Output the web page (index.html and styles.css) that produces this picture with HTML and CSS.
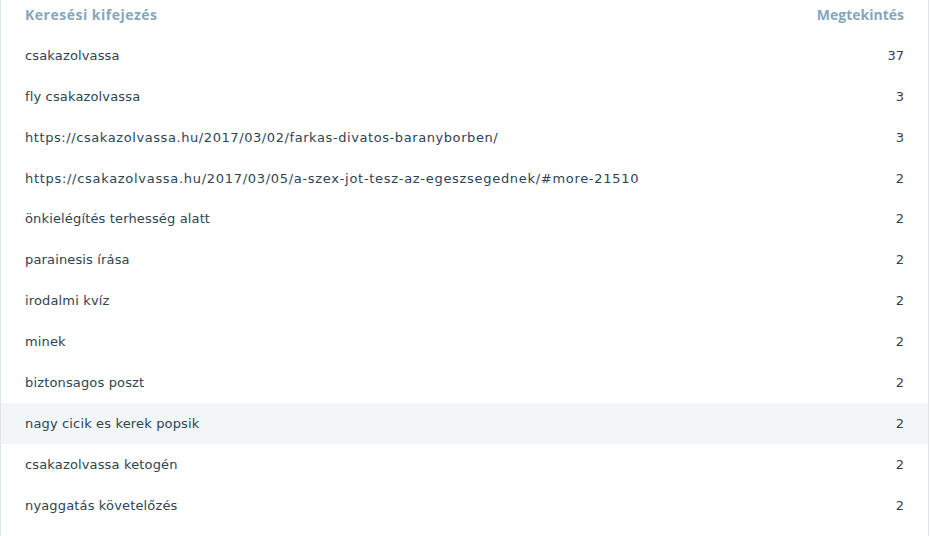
FILE: index.html
```html
<!DOCTYPE html>
<html lang="hu">
<head>
<meta charset="utf-8">
<title>Keresési kifejezések</title>
<link rel="stylesheet" href="styles.css">
</head>
<body>
<div class="card">
  <div class="row head">
    <span class="label">Keresési kifejezés</span>
    <span class="value">Megtekintés</span>
  </div>
  <ul class="list">
    <li class="row"><span class="label">csakazolvassa</span><span class="value">37</span></li>
    <li class="row"><span class="label">fly csakazolvassa</span><span class="value">3</span></li>
    <li class="row"><span class="label url">https://csakazolvassa.hu/2017/03/02/farkas-divatos-baranyborben/</span><span class="value">3</span></li>
    <li class="row"><span class="label url long">https://csakazolvassa.hu/2017/03/05/a-szex-jot-tesz-az-egeszsegednek/#more-21510</span><span class="value">2</span></li>
    <li class="row"><span class="label">önkielégítés terhesség alatt</span><span class="value">2</span></li>
    <li class="row"><span class="label">parainesis írása</span><span class="value">2</span></li>
    <li class="row"><span class="label">irodalmi kvíz</span><span class="value">2</span></li>
    <li class="row"><span class="label">minek</span><span class="value">2</span></li>
    <li class="row"><span class="label">biztonsagos poszt</span><span class="value">2</span></li>
    <li class="row hover"><span class="label">nagy cicik es kerek popsik</span><span class="value">2</span></li>
    <li class="row"><span class="label">csakazolvassa ketogén</span><span class="value">2</span></li>
    <li class="row"><span class="label">nyaggatás követelőzés</span><span class="value">2</span></li>
  </ul>
</div>
</body>
</html>
```
FILE: styles.css
```css
html, body {
  margin: 0;
  padding: 0;
  background: #fff;
  overflow: hidden;
}
body {
  font-family: "DejaVu Sans", "Noto Sans", sans-serif;
  font-size: 13px;
  color: #2e4453;
  width: 930px;
  height: 536px;
}
.card {
  width: 927px;
  border-left: 1px solid #dde5ea;
  border-right: 1px solid #dde5ea;
  margin-top: -6px;
  padding-bottom: 20px;
}
.list {
  list-style: none;
  margin: 0;
  padding: 0;
}
.row {
  display: flex;
  justify-content: space-between;
  align-items: center;
  height: 40.9px;
  padding: 0 24px;
}
.label {
  letter-spacing: 0.15px;
}
.url {
  letter-spacing: 0.58px;
}
.url.long {
  letter-spacing: 0.7px;
}
.head {
  font-family: "Open Sans", "Noto Sans", sans-serif;
  font-size: 14px;
  font-weight: 700;
  color: #87a6bc;
}
.head .label {
  letter-spacing: 0.5px;
}
.hover {
  background: #f3f6f8;
}
```
